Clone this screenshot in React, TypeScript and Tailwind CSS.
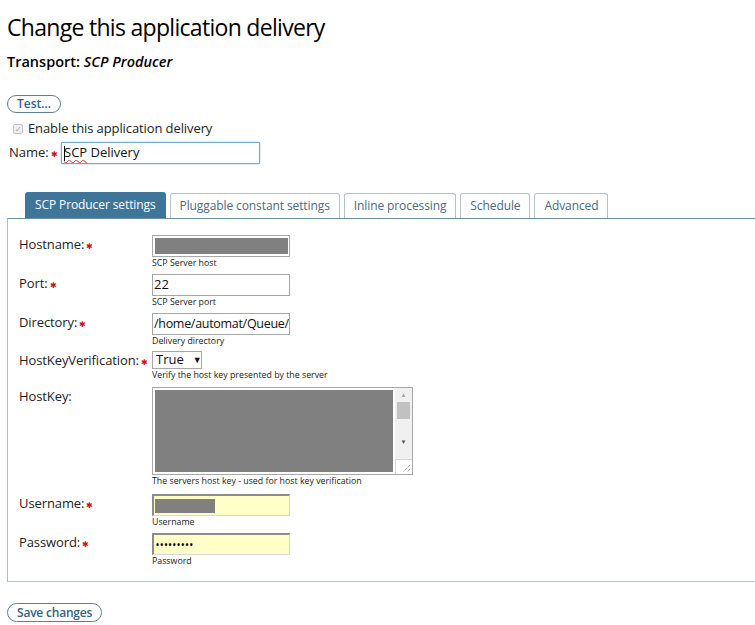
import { ReactNode } from 'react';

const font = { fontFamily: '"Open Sans", "Liberation Sans", sans-serif' };

const Req = () => <span className="ml-[2px] align-middle text-[8px] leading-none text-[#cc1111]">✱</span>;

const Help = ({ children }: { children: ReactNode }) => (
  <div className="h-[13px] whitespace-nowrap text-[8.8px] leading-[13px] text-[#222]">{children}</div>
);

const Row = ({ label, required, children, className }: { label: string; required?: boolean; children: ReactNode; className?: string }) => (
  <div className={`flex ${className ?? ''}`}>
    <div className="w-[133px] shrink-0 whitespace-nowrap pt-[1px] text-[13px] leading-[16px] tracking-[-0.1px] text-[#222]">
      {label}
      {required ? <Req /> : null}
    </div>
    <div>{children}</div>
  </div>
);

const TextBox = ({ children, yellow }: { children?: ReactNode; yellow?: boolean }) => (
  <div
    className={
      yellow
        ? 'flex h-[22px] w-[138px] items-center border border-[#d8d8d8] border-l-2 border-t-2 border-l-[#8c8c8c] border-t-[#8c8c8c] bg-[#ffffc8] pl-[1px]'
        : 'flex h-[22px] w-[138px] items-center overflow-hidden whitespace-nowrap border border-[#a7a7a7] bg-white px-[1px] text-[13px] text-[#111]'
    }
  >
    {children}
  </div>
);

const tabs = ['SCP Producer settings', 'Pluggable constant settings', 'Inline processing', 'Schedule', 'Advanced'];

export default function App() {
  return (
    <div className="min-h-[625px] bg-white pl-[7px]" style={font}>
      <h1 className="pt-[12px] text-[23px] leading-[30px] tracking-[-0.7px] text-black">Change this application delivery</h1>
      <h2 className="mt-[10px] text-[14.5px] font-semibold leading-[20px] text-black">
        Transport: <i>SCP Producer</i>
      </h2>

      <button className="mt-[23px] flex h-[18px] items-center rounded-full border border-[#5f8196] px-[9px] text-[12px] font-semibold text-[#35627d]">
        Test...
      </button>

      <div className="mt-[8px] flex h-[16px] items-center pl-[6px] text-[13px] tracking-[-0.1px] text-[#222]">
        <span className="mr-[5px] flex h-[10px] w-[10px] items-center justify-center rounded-[2px] border border-[#c4c4c4] bg-[#efefef] text-[8px] leading-none text-[#a0a0a0]">
          ✓
        </span>
        Enable this application delivery
      </div>

      <div className="mt-[5px] flex items-center pl-[2px]">
        <span className="w-[52px] text-[13px] text-[#222]">
          Name:
          <Req />
        </span>
        <div className="flex h-[22px] w-[199px] items-center border border-[#7aa9cf] px-[2px] text-[13px] text-[#111] shadow-[0_0_2px_#a9cbe6]">
          <span className="mr-[-1px] h-[15px] w-px bg-black" />
          <span className="underline decoration-[#dd3333] decoration-wavy decoration-1 underline-offset-2">SCP</span>
          &nbsp;Delivery
        </div>
      </div>

      {/* Tabs */}
      <div className="mt-[28px] flex gap-[4px] pl-[18px]">
        {tabs.map((t, i) =>
          i === 0 ? (
            <div key={t} className="flex h-[26px] items-center whitespace-nowrap rounded-t-[3px] bg-[#3f7599] px-[10px] text-[12px] tracking-[-0.1px] text-white">
              {t}
            </div>
          ) : (
            <div
              key={t}
              className="mt-[1px] flex h-[25px] items-center whitespace-nowrap rounded-t-[3px] border border-b-0 border-[#b7c3ca] px-[9px] text-[12px] tracking-[-0.1px] text-[#4b6a80]"
            >
              {t}
            </div>
          ),
        )}
      </div>

      <div className="border-b border-l border-t border-b-[#b3bfc6] border-l-[#b3bfc6] border-t-[#6f8c9c] pb-[13px] pl-[11px] pt-[16px]">
        <Row label="Hostname:" required>
          <TextBox>
            <div className="ml-[1px] h-[16px] w-[133px] bg-[#808080]" />
          </TextBox>
          <Help>SCP Server host</Help>
        </Row>
        <Row label="Port:" required className="mt-[4px]">
          <TextBox>22</TextBox>
          <Help>SCP Server port</Help>
        </Row>
        <Row label="Directory:" required className="mt-[4px]">
          <TextBox>
            <span className="text-[12.5px] tracking-[-0.3px]">/home/automat/Queue/</span>
          </TextBox>
          <Help>Delivery directory</Help>
        </Row>
        <Row label="HostKeyVerification:" required className="mt-[3px]">
          <div className="flex h-[18px] w-[50px] items-center border border-[#a7a7a7] pl-[3px] text-[13px] text-[#111]">
            True
            <span className="ml-[9px] text-[9px]">▼</span>
          </div>
          <Help>Verify the host key presented by the server</Help>
        </Row>
        <Row label="HostKey:" className="mt-[5px]">
          <div className="flex h-[88px] w-[261px] border border-[#a7a7a7]">
            <div className="flex-1 p-[2px]">
              <div className="h-full w-full bg-[#808080]" />
            </div>
            <div className="flex w-[17px] flex-col bg-[#f0f0f0]">
              <div className="flex h-[14px] items-center justify-center text-[6px] text-[#a3a3a3]">▲</div>
              <div className="mx-[2px] h-[17px] bg-[#c1c1c1]" />
              <div className="flex h-[30px] items-end justify-center pb-[2px] text-[6px] text-[#505050]">▼</div>
              <div className="relative mt-auto h-[15px] border-l border-t border-[#d8d8d8] bg-white">
                <svg className="absolute bottom-[1px] right-[1px]" width="10" height="10" viewBox="0 0 10 10">
                  <path d="M9 2 L2 9 M9 6 L6 9" stroke="#777" strokeWidth="1" strokeDasharray="1 1" />
                </svg>
              </div>
            </div>
          </div>
          <Help>The servers host key - used for host key verification</Help>
        </Row>
        <Row label="Username:" required className="mt-[6px]">
          <TextBox yellow>
            <div className="h-[14px] w-[60px] bg-[#808080]" />
          </TextBox>
          <Help>Username</Help>
        </Row>
        <Row label="Password:" required className="mt-[4px]">
          <TextBox yellow>
            <span className="pl-[1px] text-[8px] font-bold leading-none tracking-[1.2px] text-black">•••••••••</span>
          </TextBox>
          <Help>Password</Help>
        </Row>
      </div>

      <button className="mt-[21px] flex h-[19px] items-center rounded-full border border-[#5f8196] px-[9px] text-[12px] font-semibold tracking-[-0.2px] text-[#35627d]">
        Save changes
      </button>
    </div>
  );
}
